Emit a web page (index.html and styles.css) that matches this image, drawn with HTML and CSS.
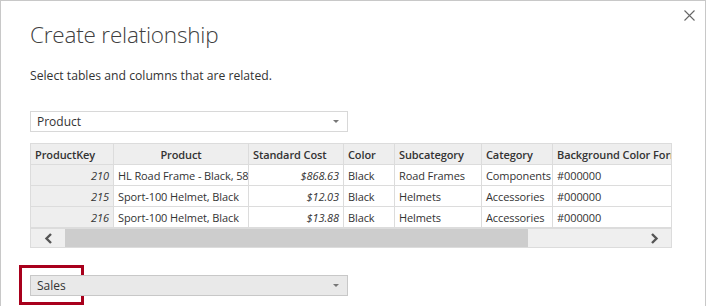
FILE: index.html
```html
<!DOCTYPE html>
<html lang="en">

<head>
  <meta charset="UTF-8">
  <title>Create relationship</title>
  <link rel="stylesheet" href="styles.css">
</head>

<body>
  <div class="dialog">
    <button class="close" aria-label="Close">
      <svg width="11" height="11" viewBox="0 0 11 11">
        <path d="M0.5 0.5 L10.5 10.5 M10.5 0.5 L0.5 10.5" stroke="#666" stroke-width="1.1" fill="none" />
      </svg>
    </button>

    <h1 class="title">Create relationship</h1>
    <p class="subtitle">Select tables and columns that are related.</p>

    <div class="select">
      <span>Product</span>
      <span class="caret"></span>
    </div>

    <div class="grid">
      <div class="grid-body">
        <table>
          <colgroup>
            <col style="width: 83px">
            <col style="width: 135px">
            <col style="width: 95px">
            <col style="width: 51px">
            <col style="width: 87px">
            <col style="width: 71px">
            <col style="width: 160px">
          </colgroup>
          <thead>
            <tr>
              <th>ProductKey</th>
              <th class="center">Product</th>
              <th>Standard Cost</th>
              <th>Color</th>
              <th>Subcategory</th>
              <th>Category</th>
              <th>Background Color Format</th>
            </tr>
          </thead>
          <tbody>
            <tr>
              <td class="key num">210</td>
              <td>HL Road Frame - Black, 58</td>
              <td class="num">$868.63</td>
              <td>Black</td>
              <td>Road Frames</td>
              <td>Components</td>
              <td>#000000</td>
            </tr>
            <tr>
              <td class="key num">215</td>
              <td>Sport-100 Helmet, Black</td>
              <td class="num">$12.03</td>
              <td>Black</td>
              <td>Helmets</td>
              <td>Accessories</td>
              <td>#000000</td>
            </tr>
            <tr>
              <td class="key num">216</td>
              <td>Sport-100 Helmet, Black</td>
              <td class="num">$13.88</td>
              <td>Black</td>
              <td>Helmets</td>
              <td>Accessories</td>
              <td>#000000</td>
            </tr>
          </tbody>
        </table>
      </div>
      <div class="scrollbar">
        <span class="arrow">
          <svg width="9" height="11" viewBox="0 0 9 11">
            <path d="M7 1 L2.5 5.5 L7 10" stroke="#555" stroke-width="2.4" fill="none" />
          </svg>
        </span>
        <div class="track">
          <div class="thumb"></div>
        </div>
        <span class="arrow">
          <svg width="9" height="11" viewBox="0 0 9 11">
            <path d="M2 1 L6.5 5.5 L2 10" stroke="#555" stroke-width="2.4" fill="none" />
          </svg>
        </span>
      </div>
    </div>

    <div class="highlight">
      <div class="select disabled">
        <span>Sales</span>
        <span class="caret"></span>
      </div>
    </div>
  </div>
</body>

</html>
```

FILE: styles.css
```css
/* Dialog im Stil von Power BI */
html,
body {
  margin: 0;
  padding: 0;
  background: #fff;
}

body {
  font-family: "Open Sans", "Noto Sans", sans-serif;
  color: #333;
  overflow: hidden;
}

.dialog {
  position: relative;
  box-sizing: border-box;
  width: 706px;
  height: 306px;
  border: 1px solid #c8c8c8;
  border-bottom: none;
  padding: 0 0 0 29px;
}

.close {
  position: absolute;
  top: 9px;
  right: 10px;
  border: none;
  background: none;
  padding: 0;
  line-height: 0;
}

.title {
  margin: 0;
  padding-top: 18px;
  font-size: 22.5px;
  font-weight: 300;
  line-height: 32px;
  color: #404040;
  letter-spacing: -0.2px;
}

.subtitle {
  margin: 0;
  padding-top: 16px;
  font-size: 12.2px;
  line-height: 17px;
  color: #333;
}

.select {
  box-sizing: border-box;
  width: 318px;
  height: 21px;
  margin-top: 27px;
  border: 1px solid #d8d8d8;
  background: #fff;
  display: flex;
  align-items: center;
  justify-content: space-between;
  padding: 0 8px 0 6px;
  font-size: 12px;
  color: #333;
}

.caret {
  width: 0;
  height: 0;
  border-left: 3px solid transparent;
  border-right: 3px solid transparent;
  border-top: 3px solid #777;
}

.grid {
  box-sizing: border-box;
  width: 642px;
  margin-top: 11px;
  border: 1px solid #dcdcdc;
}

.grid-body {
  overflow: hidden;
}

table {
  border-collapse: collapse;
  table-layout: fixed;
  width: 682px;
  font-size: 11px;
  letter-spacing: -0.1px;
  margin: -1px 0 0 -1px;
}

th,
td {
  border: 1px solid #dcdcdc;
  height: 20px;
  padding: 0 4px 0 4px;
  white-space: nowrap;
  overflow: hidden;
  text-align: left;
}

th {
  background: #eeeeee;
  font-weight: 600;
  color: #333;
}

th.center {
  text-align: center;
}

td {
  background: #fff;
  color: #333;
}

td.key {
  background: #eeeeee;
}

td.num {
  text-align: right;
  font-style: italic;
}

.scrollbar {
  display: flex;
  align-items: center;
  height: 18px;
  background: #efefef;
  border-top: 1px solid #dcdcdc;
}

.arrow {
  width: 34px;
  display: flex;
  justify-content: center;
  line-height: 0;
}

.track {
  flex: 1;
  height: 18px;
}

.thumb {
  width: 463px;
  height: 18px;
  background: #cdcdcd;
}

.highlight {
  box-sizing: border-box;
  width: 65px;
  height: 40px;
  margin: 17px 0 0 -11px;
  border: 3px solid #a8001c;
  padding: 7px 0 0 8px;
}

.select.disabled {
  margin-top: 0;
  background: #e9e9e9;
  border-color: #c8c8c8;
}
```
